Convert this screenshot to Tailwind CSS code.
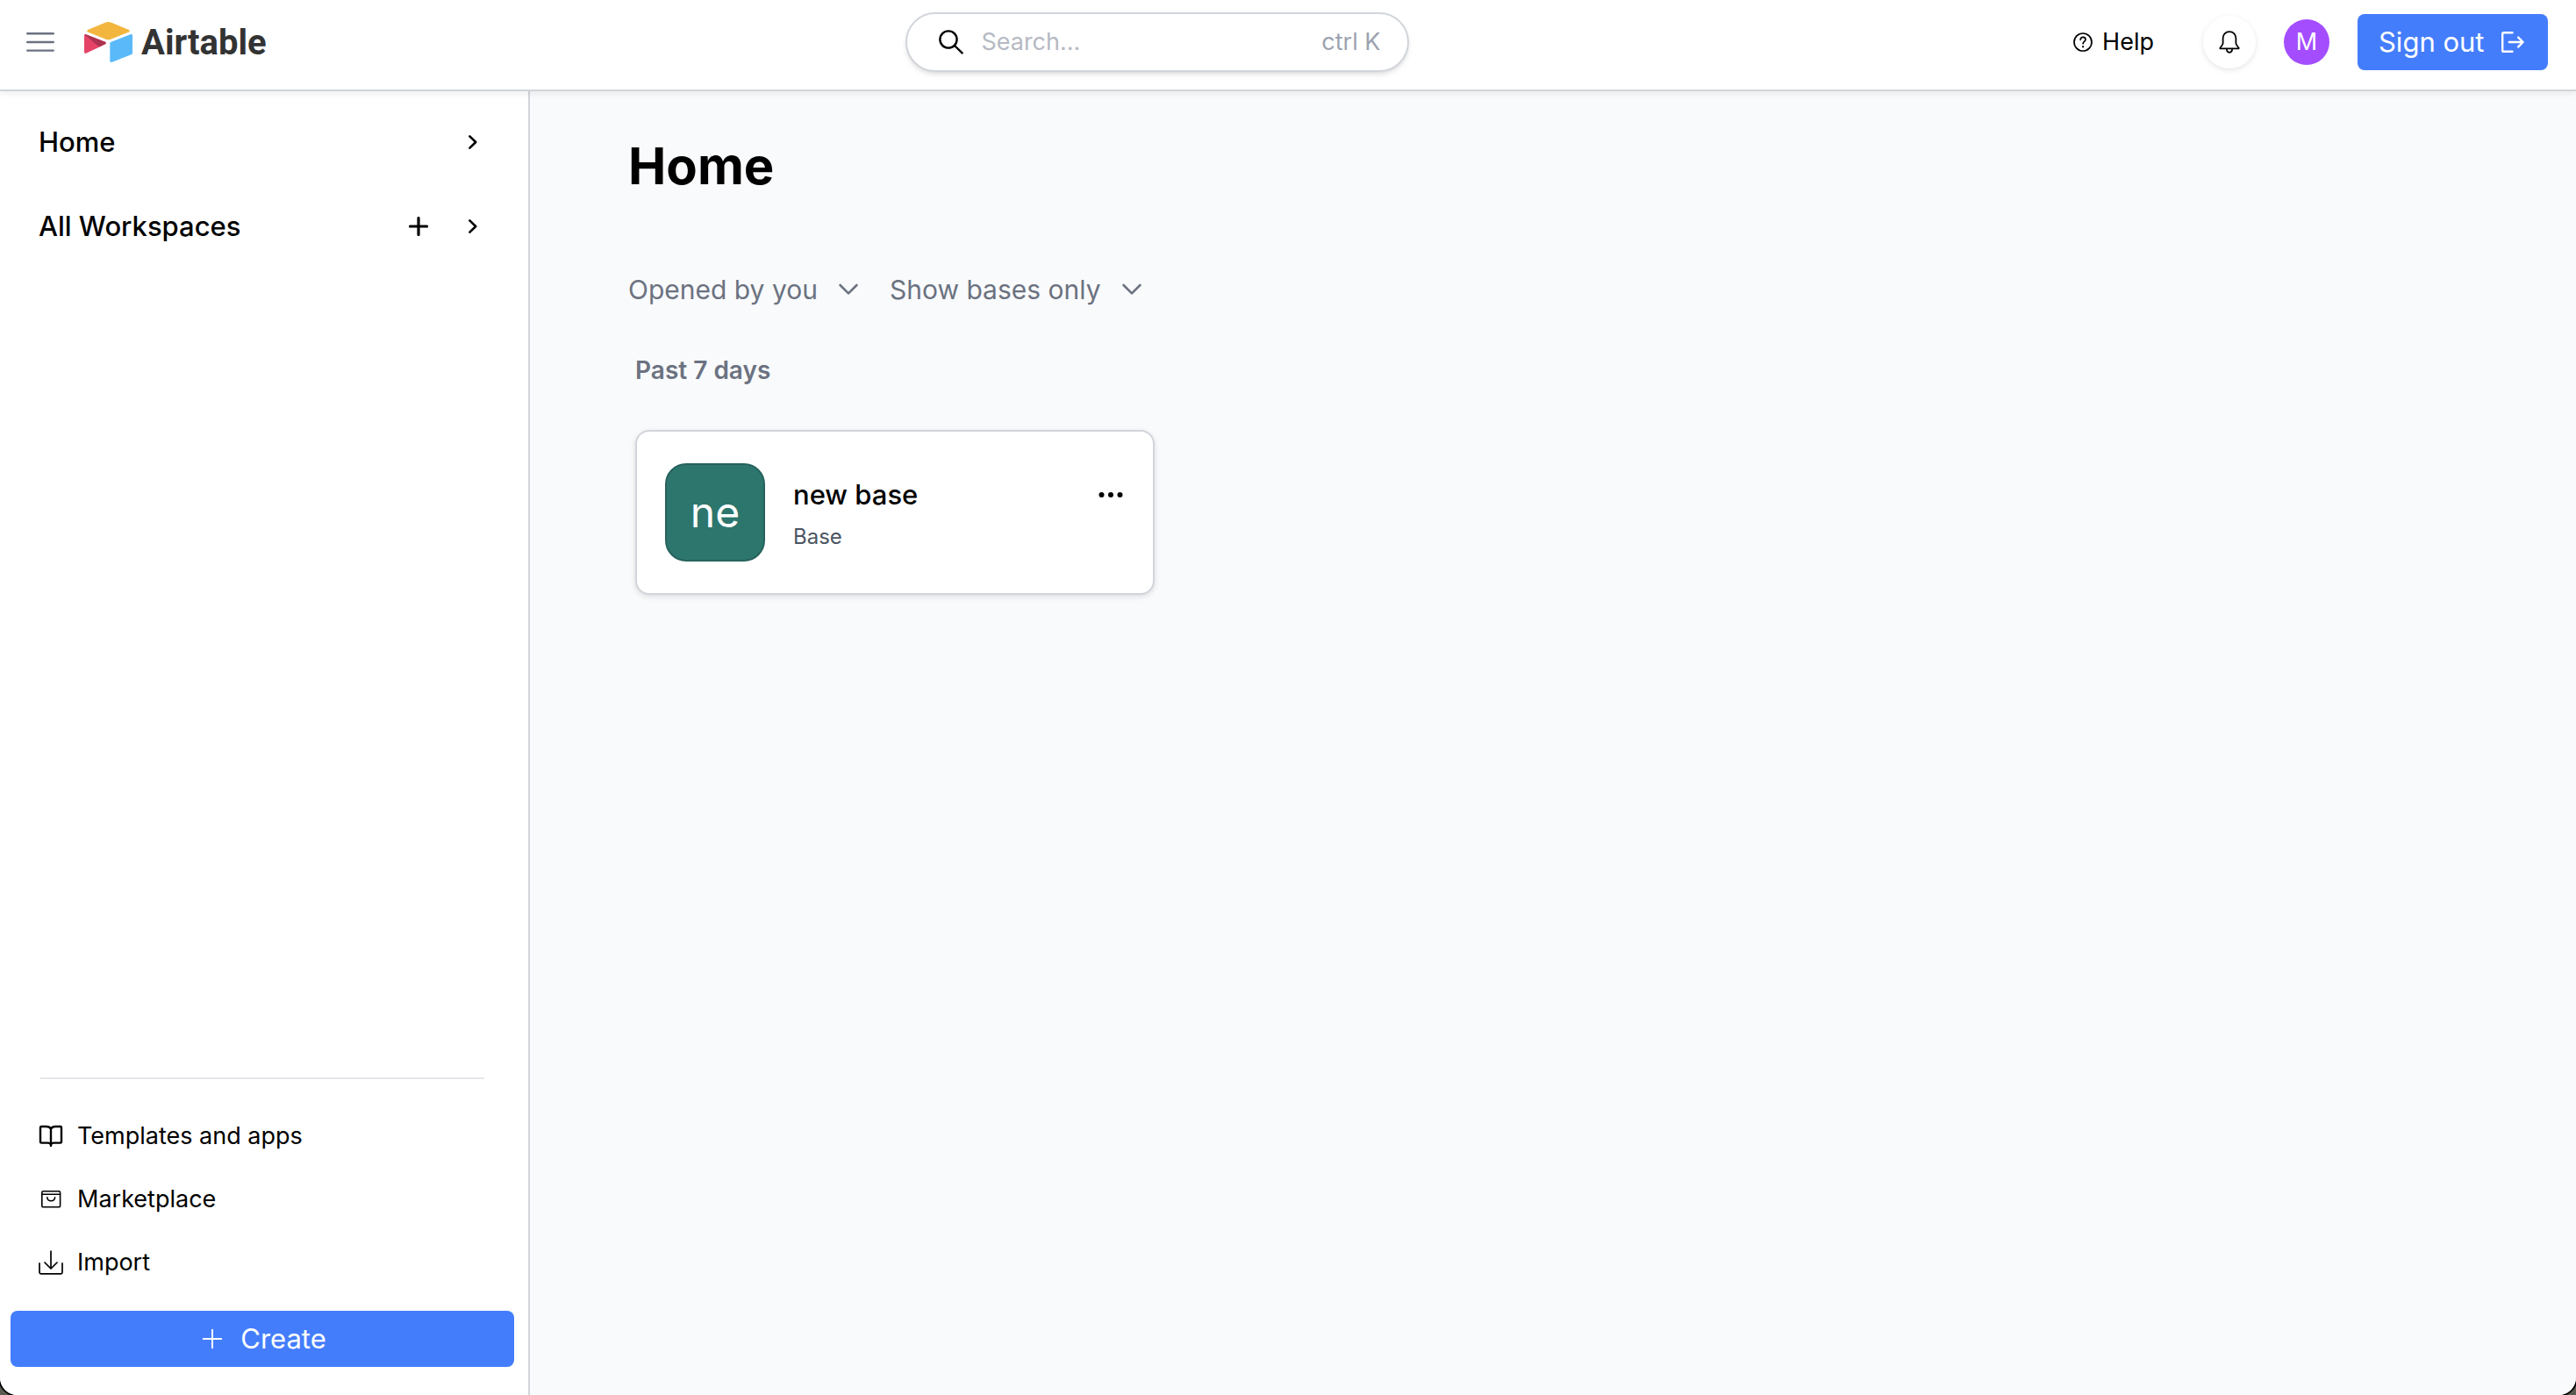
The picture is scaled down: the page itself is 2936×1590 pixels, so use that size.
<!DOCTYPE html>
<html lang="en">
<head>
<meta charset="utf-8">
<meta name="viewport" content="width=device-width, initial-scale=1">
<title>Airtable - Home</title>
<script src="https://cdn.jsdelivr.net/npm/@tailwindcss/browser@4"></script>
</head>
<body class="bg-[#5c5c52] font-['Inter',sans-serif] text-black">
<div class="flex h-screen flex-col overflow-hidden rounded-b-[20px] bg-white shadow-[0_0_0_2px_#000]">

  <header class="relative z-10 flex items-center justify-between border-b-2 border-[#d1d5db] bg-white pt-3.5 pr-8 pb-5 pl-[30px] shadow-[0_2px_8px_rgba(0,0,0,0.08)]">
    <div class="flex items-center">
      <button type="button" aria-label="Toggle menu" class="mr-[34px]">
        <svg class="block h-6 w-8" viewBox="0 0 32 24" fill="none" stroke="#6b7280" stroke-width="2.4" stroke-linecap="round"><path d="M1.2 2.2h29.6M1.2 12h29.6M1.2 21.6h29.6"/></svg>
      </button>
      <a href="#" class="flex items-center gap-2.5">
        <svg class="block h-[46px] w-[55px]" viewBox="11 10.5 177 148" aria-hidden="true">
          <path fill="#f2b63f" d="M90.039 12.368 24.079 39.66c-3.667 1.519-3.63 6.729.062 8.192l66.235 26.266a24.58 24.58 0 0 0 18.12 0l66.236-26.266c3.69-1.463 3.729-6.673.062-8.192l-65.96-27.292a24.58 24.58 0 0 0-18.795 0"/>
          <path fill="#5abaf9" d="M105.312 88.46v65.617c0 3.12 3.147 5.258 6.048 4.108l73.806-28.648a4.42 4.42 0 0 0 2.79-4.108V59.813c0-3.121-3.147-5.258-6.048-4.108l-73.806 28.648a4.42 4.42 0 0 0-2.79 4.108"/>
          <path fill="#e64467" d="m88.078 91.846-21.904 10.576-2.224 1.075-46.238 22.155c-2.93 1.414-6.672-.722-6.672-3.978V60.088c0-1.178.604-2.195 1.414-2.96a5.024 5.024 0 0 1 1.12-.84c1.104-.663 2.68-.84 4.02-.31L87.71 83.76c3.564 1.414 3.844 6.408.368 8.087"/>
          <path fill="#ac3350" d="m88.078 91.846-21.904 10.576-53.72-45.295a5.024 5.024 0 0 1 1.12-.839c1.104-.663 2.68-.84 4.02-.31L87.71 83.76c3.564 1.414 3.844 6.408.368 8.087"/>
        </svg>
        <span class="pt-0.5 font-['Roboto',sans-serif] text-[40px] leading-[50px] font-bold text-[#333]">Airtable</span>
      </a>
    </div>

    <label class="flex h-[68px] w-[574px] items-center rounded-full border-2 border-[#d1d5db] bg-white pr-[31px] pl-9 shadow-md">
      <svg class="block h-7 w-7 shrink-0" viewBox="0 0 28 28" fill="none" stroke="#000" stroke-width="2.4" stroke-linecap="round" aria-hidden="true"><circle cx="11" cy="11" r="9.6"/><path d="m18 18 8.6 8.4"/></svg>
      <input type="text" aria-label="Search" placeholder="Search..." class="ml-5 min-w-0 flex-1 bg-transparent text-[27px] outline-none placeholder:text-[#b5b9c3]">
      <kbd class="font-['Inter',sans-serif] text-[27px] text-[#9ca3af]">ctrl K</kbd>
    </label>

    <div class="flex items-center">
      <button type="button" class="flex items-center gap-[11px] px-7 text-[27px]">
        <svg class="block h-[22px] w-[22px]" viewBox="0 0 22 22" fill="none" stroke="#000" stroke-width="1.7" stroke-linecap="round" stroke-linejoin="round" aria-hidden="true"><circle cx="11" cy="11" r="10"/><path d="M8.2 8.3C8.3 6.4 9.5 5.4 11.1 5.4c1.700 0 2.900 1.100 2.900 2.600 0 2.300-2.900 2.300-2.900 4.700"/><path d="M11.1 16.100v.2" stroke-width="2.200"/></svg>
        Help
      </button>
      <button type="button" aria-label="Notifications" class="ml-7 flex h-[60px] w-[60px] items-center justify-center rounded-full bg-white shadow-[0_2px_6px_rgba(0,0,0,0.1)]">
        <svg class="block h-[26px] w-6" viewBox="0 0 24 26" fill="none" stroke="#000" stroke-width="1.800" stroke-linejoin="round" stroke-linecap="round"><path d="M12 1.200c-4.600 0-7.400 3.300-7.400 7.400v5.600c0 1.800-1.200 3-2.700 4.700-.6.700-.9 1.500 0 1.500h20.200c.9 0 .6-.8 0-1.500-1.500-1.700-2.700-2.900-2.700-4.700V8.600c0-4.100-2.800-7.400-7.400-7.400Z"/><path d="M8.900 20.600c0 2.500 1.200 4.200 3.100 4.200s3.100-1.700 3.100-4.200"/></svg>
      </button>
      <button type="button" aria-label="Account" class="ml-8 flex h-[52px] w-[52px] items-center justify-center rounded-full bg-[#a44dff] text-[27px] text-white">M</button>
      <button type="button" class="ml-8 flex h-16 w-[217px] items-center justify-between rounded-lg bg-[#447dfc] pr-[27px] pl-6 text-[31px] text-white">
        Sign out
        <svg class="block h-6 w-[26px]" viewBox="0 0 26 24" fill="none" stroke="#fff" stroke-width="2.400" stroke-linecap="round" stroke-linejoin="round" aria-hidden="true"><path d="M12.500 1.200H2.600c-.8 0-1.400.6-1.400 1.400v18.800c0 .8.600 1.400 1.400 1.400h9.900M8.800 12h15.600M19.200 6.600l5.400 5.400-5.400 5.400"/></svg>
      </button>
    </div>
  </header>

  <div class="flex min-h-0 flex-1">
    <aside class="flex w-[604px] shrink-0 flex-col justify-between border-r-2 border-[#d1d5db] bg-white pt-[34px] pb-8">
      <nav class="flex flex-col gap-12 pr-14 pl-11 text-[31px] font-medium">
        <div class="flex h-12 items-center justify-between">
          <a href="#">Home</a>
          <button type="button" aria-label="Expand Home" class="pr-0.5">
            <svg class="block h-4 w-2.5" viewBox="0 0 10 16" fill="none" stroke="#000" stroke-width="2.600" stroke-linecap="round" stroke-linejoin="round"><path d="m1.400 1.400 6.800 6.600-6.800 6.600"/></svg>
          </button>
        </div>
        <div class="flex h-12 items-center justify-between">
          <a href="#">All Workspaces</a>
          <span class="flex items-center gap-[46px]">
            <button type="button" aria-label="Add workspace">
              <svg class="block h-[22px] w-[22px]" viewBox="0 0 22 22" fill="none" stroke="#000" stroke-width="3.200" stroke-linecap="round"><path d="M11 1.500v19M1.500 11h19"/></svg>
            </button>
            <button type="button" aria-label="Expand workspaces" class="pr-0.5">
              <svg class="block h-4 w-2.5" viewBox="0 0 10 16" fill="none" stroke="#000" stroke-width="2.600" stroke-linecap="round" stroke-linejoin="round"><path d="m1.400 1.400 6.800 6.600-6.800 6.600"/></svg>
            </button>
          </span>
        </div>
      </nav>

      <div class="flex flex-col">
        <div class="mr-[50px] ml-11 flex flex-col gap-6 text-[27px]">
          <hr class="mb-[17px] ml-0.5 border-t-2 border-[#e5e7eb]">
          <a href="#" class="flex h-12 items-center gap-4">
            <svg class="block h-7 w-7" viewBox="0 0 28 28" fill="none" stroke="#000" stroke-width="2.400" stroke-linecap="round" stroke-linejoin="round" aria-hidden="true"><path d="M14 5.600C12.800 3.600 11 3 8.800 3H3.200c-.8 0-1.200.4-1.200 1.200v16.200c0 .8.400 1.200 1.200 1.200h7.200c2 0 3.200.8 3.600 2.400.4-1.600 1.600-2.400 3.600-2.400h7.200c.8 0 1.200-.4 1.200-1.200V4.200c0-.8-.4-1.200-1.200-1.200h-5.600c-2.200 0-4 .6-5.200 2.600ZM14 5.600V25"/></svg>
            Templates and apps
          </a>
          <a href="#" class="flex h-12 items-center gap-4">
            <svg class="block h-7 w-7" viewBox="0 0 28 28" fill="none" stroke="#000" stroke-width="1.600" stroke-linecap="round" stroke-linejoin="round" aria-hidden="true"><rect x="3.800" y="4.800" width="20.800" height="18" rx="1.400"/><path d="M4 8.200h20.400M9.800 11.800c.2 2.600 1.900 4 4.400 4s4.200-1.400 4.400-4"/></svg>
            Marketplace
          </a>
          <a href="#" class="flex h-12 items-center gap-4">
            <svg class="block h-7 w-7" viewBox="0 0 28 28" fill="none" stroke="#000" stroke-width="1.700" stroke-linecap="round" stroke-linejoin="round" aria-hidden="true"><path d="M14 1v19.600M7 14l7 7 7-7M1 14.800v10.400c0 1 .6 1.600 1.600 1.600h22.800c1 0 1.600-.6 1.600-1.600V14.800"/></svg>
            Import
          </a>
        </div>
        <button type="button" class="mt-[31px] mr-4 ml-3 flex h-16 items-center justify-center gap-5 rounded-lg bg-[#447dfc] pl-1 text-[31px] text-white">
          <svg class="block h-6 w-6" viewBox="0 0 24 24" fill="none" stroke="#fff" stroke-width="2" stroke-linecap="round" aria-hidden="true"><path d="M12 1.800v20.400M1.800 12h20.400"/></svg>
          Create
        </button>
      </div>
    </aside>

    <main class="flex-1 bg-[#f9fafc] px-28 pt-[49px]">
      <h1 class="text-[58px] leading-[72px] font-bold">Home</h1>

      <div class="mt-[81px] flex h-12 items-center gap-9 text-[30px] text-[#6b7280]">
        <span class="flex items-center gap-6">
          <select aria-label="Sort bases" class="appearance-none bg-transparent leading-10"><option>Opened by you</option></select>
          <svg class="pointer-events-none block h-3.5 w-[22px]" viewBox="0 0 22 14" fill="none" stroke="currentColor" stroke-width="2.600" stroke-linecap="round" stroke-linejoin="round"><path d="m1.600 2 9.400 9.400L20.400 2"/></svg>
        </span>
        <span class="flex items-center gap-6">
          <select aria-label="Filter items" class="appearance-none bg-transparent leading-10"><option>Show bases only</option></select>
          <svg class="pointer-events-none block h-3.5 w-[22px]" viewBox="0 0 22 14" fill="none" stroke="currentColor" stroke-width="2.600" stroke-linecap="round" stroke-linejoin="round"><path d="m1.600 2 9.400 9.400L20.400 2"/></svg>
        </span>
      </div>

      <section class="mt-12 ml-2">
        <h2 class="text-[28px] leading-10 font-semibold text-[#6b7280]">Past 7 days</h2>
        <article class="mt-12 flex w-[592px] gap-8 rounded-2xl border-2 border-[#d1d5db] bg-white px-8 py-9 shadow-[0_2px_6px_rgba(0,0,0,0.12)]">
          <div class="flex h-28 w-[114px] shrink-0 items-center justify-center rounded-3xl border-2 border-[#27625d] bg-[#2d766e] text-[48px] leading-none text-white">ne</div>
          <div class="flex flex-1 flex-col gap-3 pt-4">
            <div class="flex h-10 items-center justify-between">
              <h3 class="text-[31px] leading-10 font-medium">new base</h3>
              <button type="button" aria-label="More options" class="pr-0.5">
                <svg class="block h-1.5 w-7" viewBox="0 0 28 6" fill="#000"><circle cx="3.500" cy="3" r="3"/><circle cx="14" cy="3" r="3"/><circle cx="24.500" cy="3" r="3"/></svg>
              </button>
            </div>
            <p class="text-2xl leading-8 text-[#4b5563]">Base</p>
          </div>
        </article>
      </section>
    </main>
  </div>
</div>
</body>
</html>
